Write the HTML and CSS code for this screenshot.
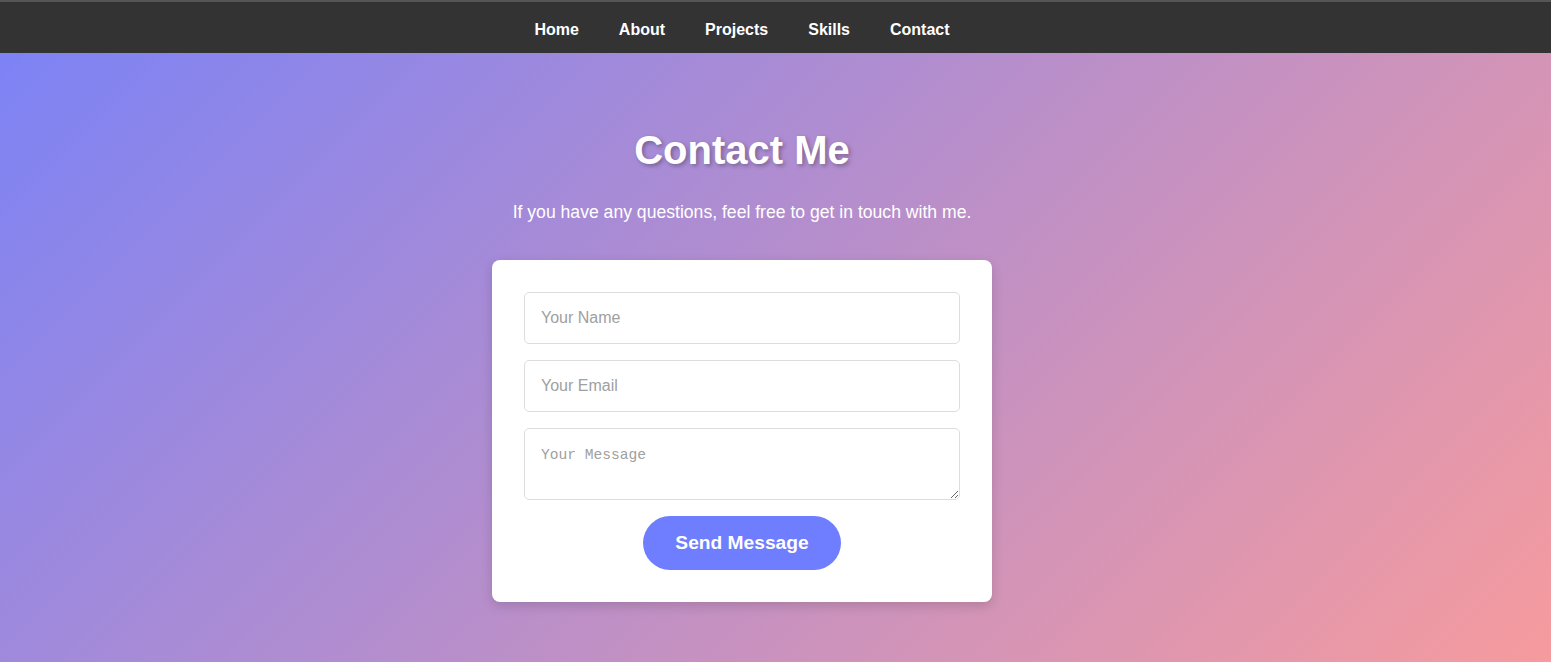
FILE: index.html
```html
<!DOCTYPE html>
<html lang="en">
<head>
<meta charset="utf-8">
<title>Contact Me</title>
<link rel="stylesheet" href="styles.css">
</head>
<body>
<nav class="navbar">
  <ul class="nav-list">
    <li><a href="#">Home</a></li>
    <li><a href="#">About</a></li>
    <li><a href="#">Projects</a></li>
    <li><a href="#">Skills</a></li>
    <li><a href="#">Contact</a></li>
  </ul>
</nav>
<main class="contact">
  <div class="contact-inner">
    <h1 class="title">Contact Me</h1>
    <p class="subtitle">If you have any questions, feel free to get in touch with me.</p>
    <form class="card">
      <input class="field" type="text" placeholder="Your Name">
      <input class="field" type="email" placeholder="Your Email">
      <textarea class="field area" placeholder="Your Message"></textarea>
      <button class="send" type="button">Send Message</button>
    </form>
  </div>
</main>
</body>
</html>
```
FILE: styles.css
```css
html, body {
  margin: 0;
  padding: 0;
}
body {
  font-family: "Liberation Sans", Arial, sans-serif;
  min-height: 662px;
  background: linear-gradient(135deg, #7a82f7 0%, #f69b9e 100%);
}
.navbar {
  background: #333333;
  height: 53px;
  border-top: 2px solid #555;
  padding-top: 4px;
  box-sizing: border-box;
}
.nav-list {
  list-style: none;
  margin: 0;
  padding: 0;
  width: 1484px;
  height: 100%;
  display: flex;
  justify-content: center;
  align-items: center;
}
.nav-list li {
  margin: 0 20px;
}
.nav-list a {
  color: #fff;
  text-decoration: none;
  font-weight: bold;
  font-size: 16px;
}
.contact {
  width: 1484px;
}
.contact-inner {
  display: flex;
  flex-direction: column;
  align-items: center;
  padding-top: 74px;
  padding-bottom: 60px;
}
.title {
  margin: 0;
  font-size: 40px;
  line-height: 46px;
  color: #fff;
  text-shadow: 2px 2px 4px rgba(0, 0, 0, 0.3);
}
.subtitle {
  margin: 28px 0 0;
  font-size: 17.6px;
  line-height: 22px;
  color: #fff;
}
.card {
  margin-top: 37px;
  width: 500px;
  box-sizing: border-box;
  padding: 32px;
  background: #fff;
  border-radius: 8px;
  box-shadow: 0 4px 12px rgba(0, 0, 0, 0.15);
  display: flex;
  flex-direction: column;
  align-items: center;
  gap: 16px;
}
.field {
  width: 100%;
  box-sizing: border-box;
  height: 52px;
  padding: 16px;
  border: 1px solid #dddddd;
  border-radius: 5px;
  font-family: "Liberation Sans", Arial, sans-serif;
  font-size: 16px;
  color: #333;
  background: #fff;
  outline: none;
}
.field::placeholder {
  color: #a0a0a0;
}
.area {
  height: 72px;
  font-family: "Liberation Mono", monospace;
  font-size: 14.6px;
  line-height: 21px;
  resize: vertical;
}
.send {
  background: #6f7dff;
  color: #fff;
  border: none;
  border-radius: 27px;
  padding: 16px 32px;
  font-family: "Liberation Sans", Arial, sans-serif;
  font-weight: bold;
  font-size: 19.2px;
  line-height: 22px;
  cursor: pointer;
}
```
